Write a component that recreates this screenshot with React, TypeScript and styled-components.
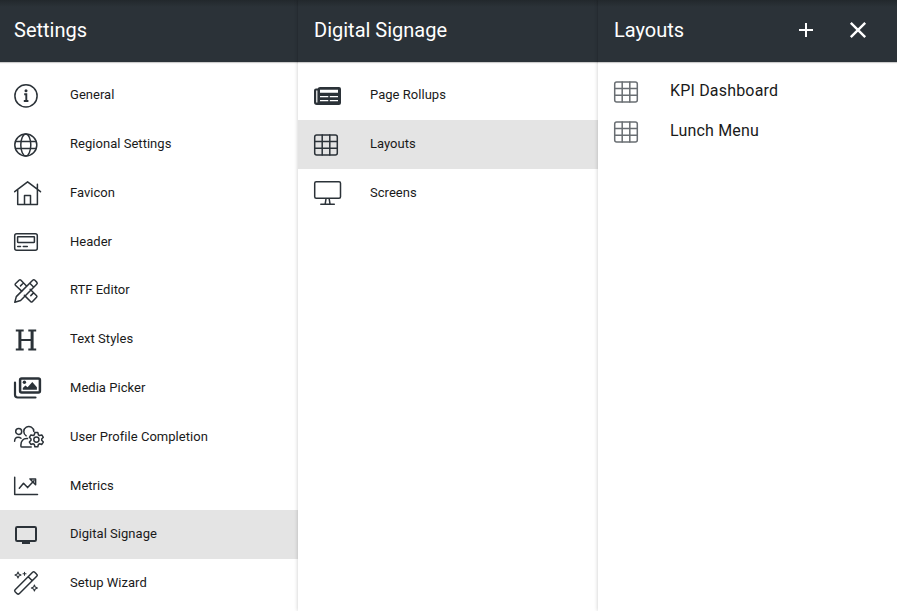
import React from "react";
import styled, { createGlobalStyle } from "styled-components";

const GlobalStyle = createGlobalStyle`
  * { box-sizing: border-box; }
  body { margin: 0; background: #fff; font-family: Roboto, "Liberation Sans", sans-serif; overflow: hidden; }
`;

const Page = styled.div`
  display: grid;
  grid-template-columns: 298px 300px 299px;
  width: 897px;
  height: 611px;
  overflow: hidden;
  background: #fff;
`;

const Panel = styled.section<{ $level: number }>`
  position: relative;
  z-index: ${(p) => p.$level};
  display: flex;
  flex-direction: column;
  min-width: 0;
  background: #fff;
  box-shadow: 0 0 4px rgba(0, 0, 0, 0.22);
`;

const PanelHeader = styled.header<{ $inset: number }>`
  display: flex;
  align-items: center;
  flex: none;
  height: 62px;
  padding: 0 26px 2px ${(p) => p.$inset}px;
  color: #fff;
  background: linear-gradient(#22282c, #2b3238 7px);
  box-shadow: 0 1px 1px rgba(0, 0, 0, 0.2);
`;

const Title = styled.h1`
  flex: 1;
  margin: 0;
  font-size: 20px;
  font-weight: 430;
  line-height: 24px;
`;

const HeaderButton = styled.button`
  display: flex;
  align-items: center;
  justify-content: center;
  width: 26px;
  height: 26px;
  margin-left: 26px;
  padding: 0;
  border: 0;
  color: #fff;
  background: none;
`;

const Menu = styled.nav`
  display: flex;
  flex-direction: column;
  padding-top: 9.2px;
`;

const MenuItem = styled.a<{ $inset: number; $active?: boolean }>`
  display: flex;
  align-items: center;
  flex: none;
  height: 48.8px;
  padding-left: ${(p) => p.$inset}px;
  color: #1a1a1a;
  background: ${(p) => (p.$active ? "#e4e4e4" : "transparent")};
`;

const MenuLabel = styled.span`
  margin-left: 24px;
  padding-bottom: 0.8px;
  font-size: 13px;
  font-weight: 450;
  line-height: 18px;
  letter-spacing: 0.03px;
  white-space: nowrap;
`;

const LayoutList = styled.div`
  display: flex;
  flex-direction: column;
  padding-top: 9px;
`;

const LayoutItem = styled.a`
  display: flex;
  align-items: center;
  height: 40px;
  padding-left: 16px;
  color: #1a1a1a;
`;

const LayoutLabel = styled.span`
  margin-left: 24px;
  font-size: 16px;
  font-weight: 440;
  line-height: 20px;
  letter-spacing: 0.18px;
`;

const IconSvg = styled.svg<{ $muted?: boolean }>`
  flex: none;
  width: 32px;
  height: 32px;
  overflow: visible;
  fill: none;
  stroke: #2b3238;
  opacity: ${(p) => (p.$muted ? 0.7 : 1)};
  stroke-width: 1.5;
  stroke-linecap: round;
  stroke-linejoin: round;
  .solid { fill: #2b3238; stroke: none; }
`;

const gridShape = (
  <>
    <rect x="0.7" y="6.9" width="22.6" height="20" rx="2" />
    <path d="M8.2 7v20M15.8 7v20M1 13.5h22M1 20.3h22" />
  </>
);

const shapes: Record<string, React.ReactNode> = {
  info: (
    <>
      <circle cx="12" cy="15.9" r="11.1" />
      <circle className="solid" cx="12" cy="10.8" r="1.5" />
      <path d="M10.2 14.3h2.1v6.5M9.8 21h4.6" strokeWidth="1.9" strokeLinecap="butt" strokeLinejoin="miter" />
    </>
  ),
  globe: (
    <>
      <circle cx="11.8" cy="17" r="11" />
      <ellipse cx="11.8" cy="17" rx="5" ry="11" />
      <path d="M1.5 13.4h20.6M1.5 20.6h20.6" />
    </>
  ),
  home: (
    <path d="M.7 14.7L13.6 4.8L26.5 14.7M3.7 12.5V27.4H23.4V7.2M10.5 27.4V18.5H16.5V27.4" />
  ),
  header: (
    <>
      <rect x="0.7" y="7.7" width="22.6" height="16.6" rx="2" />
      <rect x="3.6" y="10.7" width="16.8" height="5.8" rx="0.4" />
      <path d="M3.7 20.4h2.8M9.3 20.4h4" />
    </>
  ),
  tools: (
    <>
      <path d="M.8 27.3L2.3 21.6L18.7 5.3Q19.8 4.3 20.9 5.3L22.7 7.1Q23.8 8.2 22.7 9.3L6.6 25.5ZM15.8 8.2L19.8 12.2" />
      <path d="M7.7 16.1L1.4 10.2Q.8 9.5 1.4 8.8L5.3 5Q6 4.4 6.7 5L12.5 11M6.5 10.9L8.6 8.8M16.1 14.2L22.6 20.7Q23.3 21.5 22.6 22.2L18.3 26.7Q17.5 27.4 16.8 26.7L10.4 20.4M16.8 20.6L18.8 18.6" />
    </>
  ),
  heading: (
    <>
      <path d="M5.9 6.5v19M18.1 6.5v19" strokeWidth="3" strokeLinecap="butt" />
      <path d="M1.8 6.5h7.9M14.3 6.5h7.9M1.8 25.5h7.9M14.3 25.5h7.9M6 16h12" strokeWidth="2.2" strokeLinecap="butt" />
    </>
  ),
  media: (
    <>
      <rect x="6.1" y="6.4" width="19.8" height="14.2" rx="1.5" strokeWidth="2.5" />
      <path d="M1 10.5v12.3q0 2.7 2.7 2.7H21.5" strokeWidth="2.2" />
      <circle className="solid" cx="10.4" cy="10.3" r="1.7" />
      <path className="solid" d="M8.8 17.7V16l2.6-2.5 2.2 1.8 4.7-5.4 4.6 5.4v2.4z" />
    </>
  ),
  users: (
    <>
      <circle cx="4.7" cy="10.4" r="3" />
      <path d="M.6 20.3Q.8 16.3 4 16.3Q6 16.3 7 17.2M19.8 10.5A5 5 0 1 0 12.2 14.8M13.5 17.6C9 17.2 6.9 20 6.9 24V25.2Q6.9 26.1 8 26.1H17.2" />
      <path d="M20.9 11.5h2.9l.6 2.3 1.1.7 2.3-.6 1.5 2.4-1.6 1.7v1.3l1.6 1.7-1.5 2.4-2.3-.6-1.1.7-.6 2.3h-2.9l-.6-2.3-1.1-.7-2.3.6-1.5-2.4 1.6-1.7V18l-1.6-1.7 1.5-2.4 2.3.6 1.1-.7z" />
      <circle cx="22.4" cy="18.6" r="2.6" />
    </>
  ),
  chart: (
    <path d="M.7 7.2V24.4H23.5M5.3 18.2L9.5 13.3L13.6 17.6L20 10.7M16 8.9H21.6V14.7Z" />
  ),
  display: (
    <>
      <rect x="2" y="8" width="20" height="14" rx="1.2" strokeWidth="2" />
      <path className="solid" d="M8 22h8v3H8z" />
    </>
  ),
  wand: (
    <>
      <path d="M1.1 21.7L18.6 4.2Q19.7 3.2 20.7 4.2L22.7 6.2Q23.8 7.2 22.7 8.3L5.2 25.7Q4.2 26.6 3.1 25.7L1.1 23.8Q.2 22.8 1.1 21.7ZM14.2 8.7L18.3 12.8" />
      <path d="M4 4L4.9 6.1L7 7L4.9 7.9L4 10L3.1 7.9L1 7L3.1 6.1ZM20.4 17L21.3 19.1L23.4 20L21.3 20.9L20.4 23L19.5 20.9L17.4 20L19.5 19.1Z" strokeWidth="1.1" />
      <path d="M10.5 4.3v3M9 5.8h3" strokeWidth="1.1" />
    </>
  ),
  rollups: (
    <>
      <path className="solid" d="M6 7H25Q27 7 27 9V23Q27 25 25 25H2.8Q0 25 0 22.3V10.5Q0 8.5 2 8.5H3.7Q4 7 6 7Z" />
      <path d="M6 9.7h18v3H6zM6 16h8.3v1.3H6zM15.8 16H24v1.3h-8.2zM6 20h8.3v1.3H6zM15.8 20H24v1.3h-8.2zM2.2 10.5h1.2v12h-1.2z" fill="#fff" stroke="none" />
    </>
  ),
  grid: gridShape,
  screen: (
    <>
      <rect x="0.7" y="4.7" width="25.8" height="16.6" rx="1.5" />
      <path d="M12 21.8L11.2 26.8M15.2 21.8L16 26.8M6.8 27.3H20.3" />
    </>
  ),
};

const Icon = ({ name, muted }: { name: string; muted?: boolean }) => (
  <IconSvg viewBox="0 0 32 32" $muted={muted} aria-hidden="true">
    {shapes[name]}
  </IconSvg>
);

const settings = [
  ["info", "General"],
  ["globe", "Regional Settings"],
  ["home", "Favicon"],
  ["header", "Header"],
  ["tools", "RTF Editor"],
  ["heading", "Text Styles"],
  ["media", "Media Picker"],
  ["users", "User Profile Completion"],
  ["chart", "Metrics"],
  ["display", "Digital Signage"],
  ["wand", "Setup Wizard"],
];

const signage = [
  ["rollups", "Page Rollups"],
  ["grid", "Layouts"],
  ["screen", "Screens"],
];

const MenuPanel = ({ title, items, active, inset, level }: {
  title: string; items: string[][]; active: string; inset: number; level: number;
}) => (
  <Panel $level={level}>
    <PanelHeader $inset={inset}><Title>{title}</Title></PanelHeader>
    <Menu>
      {items.map(([icon, label]) => (
        <MenuItem key={label} $inset={inset} $active={label === active}>
          <Icon name={icon} />
          <MenuLabel>{label}</MenuLabel>
        </MenuItem>
      ))}
    </Menu>
  </Panel>
);

export default function App() {
  return (
    <>
      <GlobalStyle />
      <Page>
        <MenuPanel title="Settings" items={settings} active="Digital Signage" inset={14} level={1} />
        <MenuPanel title="Digital Signage" items={signage} active="Layouts" inset={16} level={2} />
        <Panel $level={3}>
          <PanelHeader $inset={16}>
            <Title>Layouts</Title>
            <HeaderButton aria-label="Add">
              <svg width="26" height="26" fill="none" stroke="currentColor" strokeWidth="2"><path d="M6 13h14M13 6v14" /></svg>
            </HeaderButton>
            <HeaderButton aria-label="Close">
              <svg width="26" height="26" fill="none" stroke="currentColor" strokeWidth="2.4"><path d="M5.8 5.8l14.4 14.4M20.2 5.8L5.8 20.2" /></svg>
            </HeaderButton>
          </PanelHeader>
          <LayoutList>
            {["KPI Dashboard", "Lunch Menu"].map((name) => (
              <LayoutItem key={name}>
                <Icon name="grid" muted />
                <LayoutLabel>{name}</LayoutLabel>
              </LayoutItem>
            ))}
          </LayoutList>
        </Panel>
      </Page>
    </>
  );
}
